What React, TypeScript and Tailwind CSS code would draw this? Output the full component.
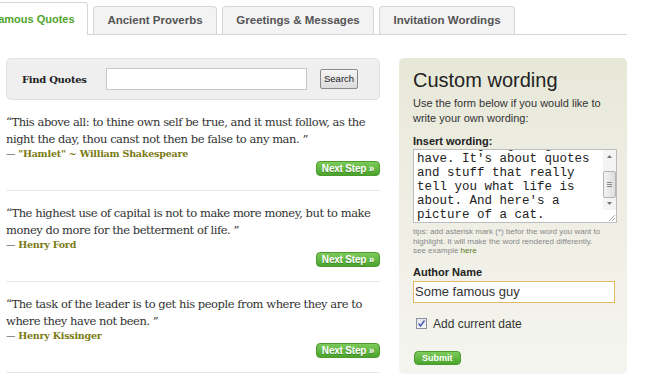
import React, { useEffect, useRef } from "react";

interface Quote {
  text: string;
  source?: string;
  author: string;
}

const quotes: Quote[] = [
  {
    text: "This above all: to thine own self be true, and it must follow, as the night the day, thou canst not then be false to any man.",
    source: '"Hamlet"',
    author: "William Shakespeare",
  },
  {
    text: "The highest use of capital is not to make more money, but to make money do more for the betterment of life.",
    author: "Henry Ford",
  },
  {
    text: "The task of the leader is to get his people from where they are to where they have not been.",
    author: "Henry Kissinger",
  },
];

const tabs = [
  { label: "Ancient Proverbs", w: "w-[124px]" },
  { label: "Greetings & Messages", w: "w-[152px]" },
  { label: "Invitation Wordings", w: "w-[136px]" },
];

const wording =
  "This is my long wording\nthat is going to go here\nhave. It's about quotes\nand stuff that really\ntell you what life is\nabout. And here's a\npicture of a cat.";

function App() {
  const areaRef = useRef<HTMLTextAreaElement>(null);

  useEffect(() => {
    if (areaRef.current) areaRef.current.scrollTop = areaRef.current.scrollHeight;
  }, []);

  return (
    <div className="h-[379px] w-[660px] overflow-hidden bg-white font-['Liberation_Sans',Arial,sans-serif]">
      {/* tabs */}
      <div className="flex h-[35px] w-[627px] items-end border-b border-[#d6d6d6]">
        <div className="-mb-px ml-[-22px] flex h-[33px] w-[110px] items-center justify-center rounded-t-[4px] border border-b-0 border-[#d6d6d6] bg-white text-[11px] font-bold text-[#4fa42c]">
          Famous Quotes
        </div>
        {tabs.map((t) => (
          <div
            key={t.label}
            className={`ml-[5px] flex h-[28px] items-center justify-center rounded-t-[4px] border border-b-0 border-[#d6d6d6] bg-[#f3f3f3] text-[11.5px] font-bold text-[#555] ${t.w}`}
          >
            {t.label}
          </div>
        ))}
      </div>

      <div className="flex gap-[19px] pl-[6px] pt-[23px]">
        {/* left column */}
        <div className="w-[374px]">
          <div className="flex h-[42px] items-center rounded-[5px] border border-[#e2e2e2] bg-[#efefef] pl-[15px]">
            <span className="w-[84px] font-['DejaVu_Serif',Georgia,serif] text-[10px] font-bold tracking-[-0.3px] text-[#222]">
              Find Quotes
            </span>
            <input className="h-[22px] w-[201px] border border-[#c8c8c8] bg-white" />
            <button className="ml-[13px] h-[20px] rounded-[2px] border border-[#8a8a8a] bg-gradient-to-b from-[#f6f6f6] to-[#dcdcdc] px-[3px] text-[9.5px] text-[#222]">
              Search
            </button>
          </div>

          <div>
            {quotes.map((q) => (
              <div key={q.author} className="border-b border-[#e6e6e6] pb-[14px] pt-[14px]">
                <p className="font-['DejaVu_Serif',Georgia,serif] text-[11.5px] leading-[17px] tracking-[-0.45px] text-[#333]">
                  “{q.text} ”
                </p>
                <p className="font-['DejaVu_Serif',Georgia,serif] text-[9.5px] leading-[12px] tracking-[-0.2px] text-[#333]">
                  —{" "}
                  <span className="font-bold text-[#7a7a14]">
                    {q.source ? `${q.source} ~ ` : ""}
                    {q.author}
                  </span>
                </p>
                <div className="mt-[1px] flex justify-end">
                  <button className="h-[15px] w-[64px] rounded-[4px] border border-[#4c9a2e] bg-gradient-to-b from-[#7ccb5a] to-[#4aa42c] text-[10px] font-bold leading-[13px] tracking-[-0.2px] text-white [text-shadow:0_1px_0_rgba(0,0,0,0.25)]">
                    Next Step »
                  </button>
                </div>
              </div>
            ))}
          </div>
        </div>

        {/* right column */}
        <div className="h-[316px] w-[228px] rounded-[5px] bg-gradient-to-b from-[#e8e8d9] to-[#f5f5f0] px-[14px] pt-[10px]">
          <h2 className="text-[20px] leading-[24px] text-[#222]">Custom wording</h2>
          <p className="mt-[4px] text-[11px] leading-[15px] text-[#333]">
            Use the form below if you would like to write your own wording:
          </p>
          <p className="mt-[8px] text-[11px] font-bold leading-[14px] text-[#222]">Insert wording:</p>
          <div className="mt-[1px] flex h-[74px] w-[204px] border border-[#bdbdbd] bg-white">
            <textarea
              ref={areaRef}
              readOnly
              defaultValue={wording}
              className="h-full flex-1 resize-none overflow-hidden bg-white px-[3px] pt-[1px] font-['Liberation_Mono','Courier_New',monospace] text-[12.5px] leading-[14px] text-[#222] outline-none"
            />
            {/* scrollbar */}
            <div className="flex w-[13px] flex-col">
              <div className="flex h-[13px] items-center justify-center bg-[#f4f4f4]">
                <svg width="5" height="3" viewBox="0 0 5 3">
                  <path d="M0 3 L2.5 0 L5 3 Z" fill="#777" />
                </svg>
              </div>
              <div className="flex flex-1 flex-col bg-[#f4f4f4] pt-[8px]">
                <div className="flex h-[27px] items-center justify-center rounded-[2px] border border-[#b4b4b4] bg-gradient-to-r from-[#f2f2f2] to-[#dedede]">
                  <svg width="5" height="5" viewBox="0 0 5 5">
                    <path d="M0 0.5 H5 M0 2.5 H5 M0 4.5 H5" stroke="#888" strokeWidth="1" />
                  </svg>
                </div>
              </div>
              <div className="flex h-[13px] items-center justify-center bg-[#f4f4f4]">
                <svg width="5" height="3" viewBox="0 0 5 3">
                  <path d="M0 0 L2.5 3 L5 0 Z" fill="#777" />
                </svg>
              </div>
              <div className="flex h-[12px] items-end justify-end bg-white p-[1px]">
                <svg width="7" height="7" viewBox="0 0 7 7">
                  <path d="M7 1 L1 7 M7 4 L4 7" stroke="#aaa" strokeWidth="1" />
                </svg>
              </div>
            </div>
          </div>
          <p className="mt-[4px] text-[8px] leading-[9.5px] text-[#888]">
            tips: add asterisk mark (*) befor the word you want to highlight. It will make the word rendered differently.
            <br />
            see example <span className="text-[#5c7a1a]">here</span>
          </p>
          <p className="mt-[9px] text-[11px] font-bold leading-[14px] text-[#222]">Author Name</p>
          <input
            readOnly
            value="Some famous guy"
            className="mt-[2px] block h-[22px] w-[202px] border border-[#e2b866] bg-white px-[1px] text-[13px] text-[#333] outline-none"
          />
          <label className="mt-[14px] flex items-center gap-[6px] pl-[3px] text-[12px] leading-[14px] text-[#333]">
            <span className="flex h-[11px] w-[11px] items-center justify-center border border-[#8e8f9f] bg-gradient-to-b from-[#e4e6ee] to-[#f6f7fa]">
              <svg width="9" height="9" viewBox="0 0 9 9" fill="none">
                <path d="M1.5 4.5 L3.5 7 L7.5 1.5" stroke="#4a5aa8" strokeWidth="1.5" />
              </svg>
            </span>
            Add current date
          </label>
          <div className="mt-[13px] pl-[1px]">
            <button className="h-[14px] rounded-[4px] border border-[#4c9a2e] bg-gradient-to-b from-[#7ccb5a] to-[#4aa42c] px-[7px] text-[9px] font-bold leading-[12px] text-white">
              Submit
            </button>
          </div>
        </div>
      </div>
    </div>
  );
}

export default App;
